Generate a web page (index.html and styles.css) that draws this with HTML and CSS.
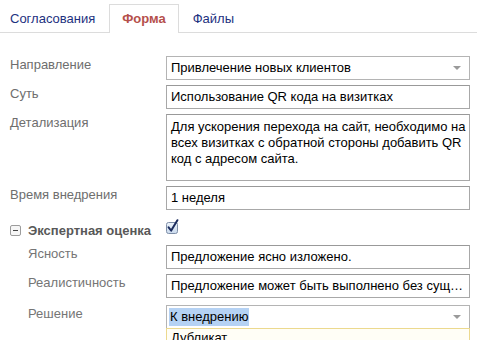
FILE: index.html
```html
<!DOCTYPE html>
<html lang="ru">
<head>
    <meta charset="UTF-8">
    <meta name="viewport" content="width=device-width, initial-scale=1.0">
    <title>Форма</title>
    <link rel="stylesheet" href="styles.css">
</head>
<body>
    <div class="tabs">
        <div class="tab">Согласования</div>
        <div class="tab active">Форма</div>
        <div class="tab">Файлы</div>
    </div>

    <div class="form">
        <div class="label">Направление</div>
        <div class="field select"><span>Привлечение новых клиентов</span><i class="arrow"></i></div>

        <div class="label">Суть</div>
        <div class="field">Использование QR кода на визитках</div>

        <div class="label">Детализация</div>
        <div class="field area">Для ускорения перехода на сайт, необходимо на<br>всех визитках с обратной стороны добавить QR<br>код с адресом сайта.</div>

        <div class="label">Время внедрения</div>
        <div class="field">1 неделя</div>

        <!-- Expert group -->
        <div class="group-label"><span class="toggle"></span>Экспертная оценка</div>
        <div class="check">
            <svg width="14" height="15" viewBox="0 0 14 15">
                <defs>
                    <linearGradient id="cb" x1="0" y1="0" x2="0" y2="1">
                        <stop offset="0" stop-color="#eef4fb"/>
                        <stop offset="1" stop-color="#c9d9ec"/>
                    </linearGradient>
                </defs>
                <rect x="0.5" y="3.5" width="11" height="11" rx="2" fill="url(#cb)" stroke="#7f8fa8"/>
                <path d="M2.6 8.4 L5.2 11.6 L11.4 1.2" fill="none" stroke="#1c2c5e" stroke-width="2" stroke-linecap="round" stroke-linejoin="round"/>
            </svg>
        </div>

        <div class="label sub">Ясность</div>
        <div class="field">Предложение ясно изложено.</div>

        <div class="label sub">Реалистичность</div>
        <div class="field">Предложение может быть выполнено без сущ…</div>

        <div class="label sub late">Решение</div>
        <div class="field select open late">
            <span class="picked">К внедрению</span><i class="arrow"></i>
            <div class="dropdown">
                <div>Дубликат</div>
            </div>
        </div>
    </div>
</body>
</html>
```

FILE: styles.css
```css
body {
    margin: 0;
    background: #fff;
    font-family: "Liberation Sans", Arial, Helvetica, sans-serif;
    font-size: 13px;
    color: #000;
}
.tabs {
    display: flex;
    padding-top: 4px;
    margin-left: -4px;
    border-bottom: 1px solid #dcdcdc;
}
.tab {
    padding: 0 13px;
    line-height: 28px;
    border: 1px solid transparent;
    border-bottom: none;
    margin-bottom: -1px;
    color: #1d3180;
}
.tab.active {
    border-color: #dcdcdc;
    background: #fff;
    color: #b54f4b;
    font-weight: bold;
    padding: 0 12px;
}
.form {
    display: grid;
    grid-template-columns: 156px 304px;
    row-gap: 5px;
    padding: 23px 7px 40px 10px;
}
.label {
    padding-top: 1px;
    line-height: 16px;
    color: #6e6e6e;
}
.label.sub {
    padding-left: 18px;
    color: #757575;
}
.late {
    margin-top: 2px;
}
.field {
    position: relative;
    height: 22px;
    line-height: 22px;
    padding: 0 4px;
    border: 1px solid #a8a8a8;
    border-top-color: #999;
    white-space: nowrap;
}
.field.area {
    height: 59px;
    line-height: 16px;
    padding: 4px 4px 2px;
}
.select {
    display: flex;
    align-items: center;
    justify-content: space-between;
    border-color: #b4b4b4;
}
.arrow {
    width: 0;
    height: 0;
    margin-right: 4px;
    border-left: 4px solid transparent;
    border-right: 4px solid transparent;
    border-top: 4px solid #9a9a9a;
}
.picked {
    background: #b5d2f4;
    line-height: 18px;
    margin-left: -2px;
    padding: 0 1px;
}
.dropdown {
    position: absolute;
    top: 22px;
    left: -1px;
    right: -1px;
    z-index: 5;
    border: 1px solid #ecd98e;
    background: #fffef6;
    line-height: 16px;
    padding: 1px 4px;
    color: #000;
}
.group-label {
    padding-top: 6px;
    line-height: 16px;
    font-weight: bold;
    color: #585858;
    display: flex;
    align-items: center;
}
.toggle {
    position: relative;
    width: 9px;
    height: 9px;
    margin-right: 7px;
    border: 1px solid #9c9c9c;
    border-radius: 2px;
    background: #f6f6f6;
}
.toggle::after {
    content: "";
    position: absolute;
    left: 2px;
    right: 2px;
    top: 4px;
    height: 1px;
    background: #444;
}
.check {
    height: 25px;
    padding-top: 4px;
    box-sizing: border-box;
}
```
